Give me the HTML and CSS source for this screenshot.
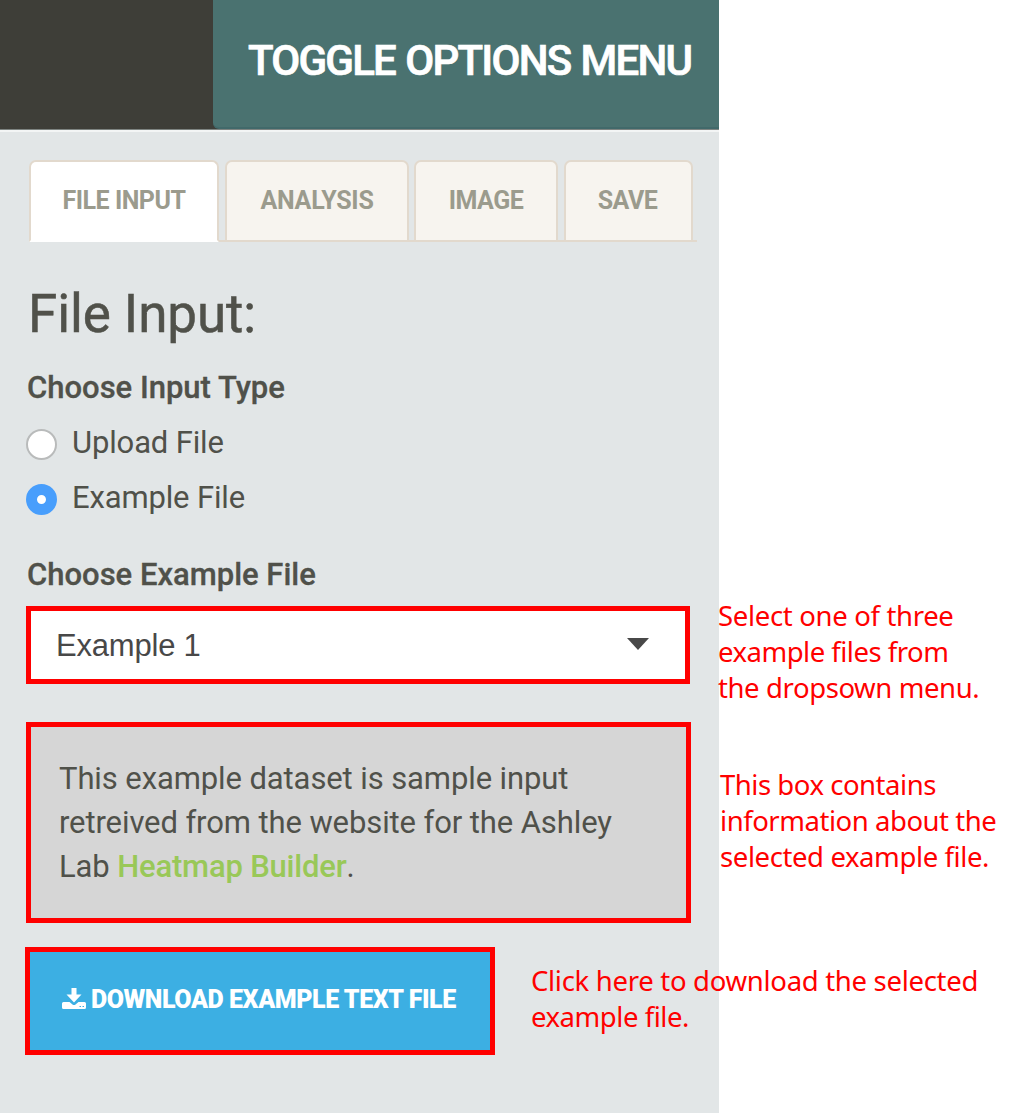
FILE: index.html
```html
<!DOCTYPE html>
<html lang="en">
<head>
<meta charset="utf-8">
<title>Toggle Options Menu</title>
<link rel="stylesheet" href="styles.css">
</head>
<body>
<div class="page">
  <main class="panel">
    <header class="topbar"><button class="toggle"><span>TOGGLE OPTIONS MENU</span></button></header>
    <nav class="tabs">
      <a class="tab tab-input active"><span>FILE INPUT</span></a>
      <a class="tab tab-analysis"><span>ANALYSIS</span></a>
      <a class="tab tab-image"><span>IMAGE</span></a>
      <a class="tab tab-save"><span>SAVE</span></a>
    </nav>
    <section class="content">
      <h1><span>File Input:</span></h1>
      <h2 class="type-label"><span>Choose Input Type</span></h2>
      <div class="option"><i class="radio"></i><span class="upload">Upload File</span></div>
      <div class="option"><i class="radio checked"></i><span class="example">Example File</span></div>
      <h2 class="file-label"><span>Choose Example File</span></h2>
      <div class="select"><span>Example 1</span><svg class="caret" viewBox="0 0 22 12"><path d="M0 0H22L11 12Z"/></svg></div>
      <div class="info">
        <span class="info-1">This example dataset is sample input</span><br>
        <span class="info-2">retreived from the website for the Ashley</span><br>
        <span class="info-3">Lab <a>Heatmap Builder</a>.</span>
      </div>
      <button class="download">
        <svg class="icon" viewBox="0 0 24 22"><path d="M9.500 0h5v6.500h5L12 14.500 4.500 6.500h5z"/><path fill-rule="evenodd" d="M1.500 14h6l3 2.500q1.500 1 3 0l3-2.500h6q1.500 0 1.500 1.500v4q0 1.500-1.500 1.500h-21Q0 21 0 19.500v-4Q0 14 1.500 14zm16 4v1h1.500v-1zm3 0v1H22v-1z"/></svg>
        <span>DOWNLOAD EXAMPLE TEXT FILE</span>
      </button>
    </section>
  </main>
  <p class="note note-select"><span class="n1">Select one of three</span><br><span class="n2">example files from</span><br><span class="n3">the dropsown menu.</span></p>
  <p class="note note-box"><span class="n4">This box contains</span><br><span class="n5">information about the</span><br><span class="n6">selected example file.</span></p>
  <p class="note note-click"><span class="n7">Click here to download the selected</span><br><span class="n8">example file.</span></p>
</div>
</body>
</html>
```
FILE: styles.css
```css
* { box-sizing: border-box; }
body { margin: 0; background: #fff; font-family: Roboto, sans-serif; color: #50514a; }
.page { position: relative; width: 1024px; height: 1113px; overflow: hidden; }
.panel { width: 719px; height: 1113px; background: #e2e6e7; }
button { font-family: inherit; border: 0; }
span { white-space: nowrap; }
.topbar { height: 132px; background: #3e3e38; display: flex; justify-content: flex-end; border-bottom: 2px solid #f3f5f5; box-shadow: inset 0 -1px #7e8481; }
.toggle { width: 506px; height: 129px; padding: 0 0 6px 35px; background: #4a7270; border-bottom: 2px solid #41696a; border-radius: 0 0 0 6px; color: #fff; font-size: 42px; line-height: 50px; font-weight: 500; text-align: left; letter-spacing: -1.75px; word-spacing: 1.5px; -webkit-text-stroke: .7px #fff; }
.tabs { display: flex; margin: 28px 22px 0 29px; height: 82px; box-shadow: inset 0 -2px #e2d9cd; }
.tab { height: 82px; border: 2px solid #e2d9cd; border-radius: 7px 7px 0 0; background: #f7f4ef; color: #9b9b8d; font-weight: 700; font-size: 25px; line-height: 78px; text-align: center; letter-spacing: -.5px; }
.tab.active { background: #fff; border-bottom-color: #fff; }
.tab-input { width: 190px; margin-right: 6px; }
.tab-analysis { width: 184px; margin-right: 5px; letter-spacing: -.25px; }
.tab-image { width: 144px; margin-right: 6px; }
.tab-save { width: 129px; padding-right: 2px; }
.content { padding: 0 28px 0 26px; }
h1 { margin: 40px 0 0 2px; font-weight: 400; font-size: 53px; line-height: 64px; letter-spacing: -.1px; -webkit-text-stroke: .5px; }
h2 { margin: 0 0 0 1px; font-size: 31px; line-height: 36px; font-weight: 500; -webkit-text-stroke: .3px; }
.type-label { margin-top: 24px; }
.option { display: flex; align-items: center; height: 55px; font-size: 31px; gap: 15px; letter-spacing: -.15px; }
.type-label + .option { margin-top: 11px; }
.option span { position: relative; top: -2px; }
.radio { width: 31px; height: 31px; border: 2px solid #b9bbbb; border-radius: 50%; background: #fff; }
.radio.checked { border: 11px solid #489efc; }
.file-label { margin-top: 30px; }
.select { width: 664px; height: 78px; margin-top: 13px; border: 5px solid red; background: #fff; display: flex; align-items: center; justify-content: space-between; padding: 0 36px 2px 25px; color: #484848; font-family: "Liberation Sans", Arial, sans-serif; font-size: 31px; letter-spacing: -.2px; }
.select span { position: relative; top: 2px; }
.caret { width: 22px; height: 12px; fill: #484848; }
.info { width: 665px; height: 201px; margin-top: 38px; border: 5px solid red; background: #d6d6d6; padding: 30px 0 0 28px; font-size: 31px; line-height: 44px; letter-spacing: -.1px; }
.info a { color: #99c858; font-weight: 500; letter-spacing: -.2px; }
.download { display: flex; align-items: center; width: 470px; height: 108px; margin: 24px 0 0 -1px; padding: 0 0 4px 32px; border: 5px solid red; background: #3cafe3; color: #fff; font-size: 25px; font-weight: 900; gap: 5px; letter-spacing: -.43px; }
.icon { width: 24px; height: 22px; fill: #fff; flex: none; }
.note { position: absolute; margin: 0; color: red; font-family: "Noto Sans", sans-serif; font-size: 27.5px; line-height: 36px; }
.note-select { left: 718px; top: 598px; }
.note-box { left: 720px; top: 767px; }
.note-click { left: 531px; top: 963px; }
.n1 { letter-spacing: -.33px; }
.n2 { letter-spacing: -.5px; }
.n3 { letter-spacing: -.4px; }
.n4 { letter-spacing: -.47px; }
.n5 { letter-spacing: -.46px; }
.n6 { letter-spacing: -.4px; }
.n7 { letter-spacing: -.3px; }
.n8 { letter-spacing: -.45px; }
```
